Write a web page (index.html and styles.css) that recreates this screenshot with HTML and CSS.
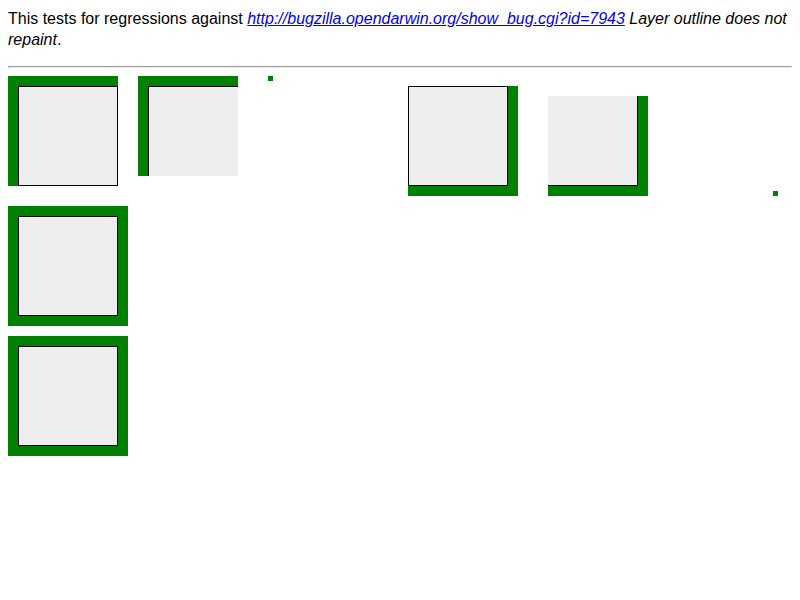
FILE: index.html
```html
<!DOCTYPE html>
<html>
<head>
<meta charset="utf-8">
<link rel="stylesheet" href="styles.css">
</head>
<body>
<p class="intro">This tests for regressions against <a class="bug" href="#"><i>http://bugzilla.opendarwin.org/show_bug.cgi?id=7943</i></a> <i>Layer outline does not repaint</i>.</p>
<hr>
<div class="row first">
  <div class="out-tl"><div class="box"></div></div>
  <div class="out-tl clip"><div class="box-tl"></div></div>
  <div class="dot dot-a"></div>
  <div class="out-br shift1"><div class="box"></div></div>
  <div class="out-br shift2"><div class="box-br"></div></div>
  <div class="dot dot-b"></div>
</div>
<div class="row">
  <div class="out-all"><div class="box"></div></div>
</div>
<div class="row">
  <div class="out-all"><div class="box"></div></div>
</div>
</body>
</html>
```

FILE: styles.css
```css
body {
  margin: 8px;
  font-family: "Liberation Sans", Arial, sans-serif;
  font-size: 16px;
  color: #000;
  background: #fff;
}
.intro {
  margin: 0 0 16px;
  line-height: 21px;
}
.bug {
  color: #0000ee;
  text-decoration: underline;
}
hr {
  margin: 8px 0;
}
.row {
  display: flex;
  align-items: flex-start;
}
.row + .row {
  margin-top: 10px;
}
.first {
  height: 120px;
}
.box {
  width: 100px;
  height: 100px;
  box-sizing: border-box;
  border: 1px solid #000;
  background: #eeeeee;
}
.out-tl {
  border-top: 10px solid #008000;
  border-left: 10px solid #008000;
}
.out-tl.clip {
  margin-left: 20px;
}
.box-tl {
  width: 90px;
  height: 90px;
  box-sizing: border-box;
  border-top: 1px solid #000;
  border-left: 1px solid #000;
  background: #eeeeee;
}
.dot {
  width: 5px;
  height: 5px;
  background: #008000;
}
.dot-a {
  margin-left: 30px;
}
.out-br {
  border-right: 10px solid #008000;
  border-bottom: 10px solid #008000;
}
.shift1 {
  margin-left: 135px;
  margin-top: 10px;
}
.shift2 {
  margin-left: 30px;
  margin-top: 20px;
}
.box-br {
  width: 90px;
  height: 90px;
  box-sizing: border-box;
  border-right: 1px solid #000;
  border-bottom: 1px solid #000;
  background: #eeeeee;
}
.dot-b {
  margin-left: 125px;
  margin-top: 115px;
}
.out-all {
  border: 10px solid #008000;
}
```
